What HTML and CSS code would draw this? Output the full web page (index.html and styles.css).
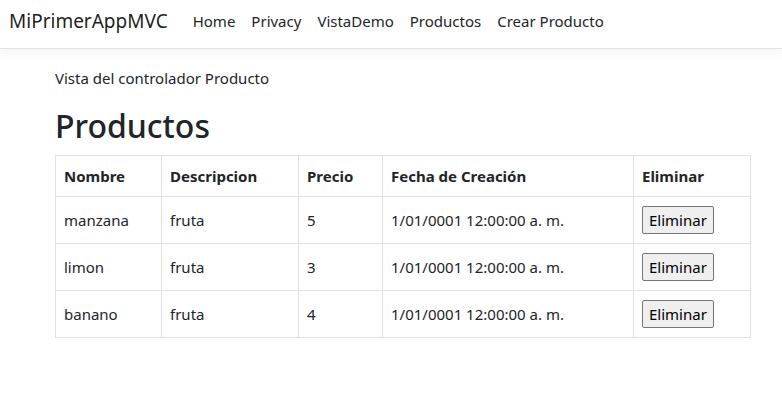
FILE: index.html
```html
<!DOCTYPE html>
<html lang="es">
<head>
<meta charset="utf-8">
<title>Productos - MiPrimerAppMVC</title>
<link rel="stylesheet" href="styles.css">
</head>
<body>
<header class="navbar">
  <a class="brand" href="#">MiPrimerAppMVC</a>
  <nav class="nav-links">
    <a href="#">Home</a>
    <a href="#">Privacy</a>
    <a href="#">VistaDemo</a>
    <a href="#">Productos</a>
    <a href="#">Crear Producto</a>
  </nav>
</header>
<main class="container">
  <p class="intro">Vista del controlador Producto</p>
  <h1 class="title">Productos</h1>
  <table class="grid">
    <thead>
      <tr>
        <th class="c-nombre">Nombre</th>
        <th class="c-desc">Descripcion</th>
        <th class="c-precio">Precio</th>
        <th class="c-fecha">Fecha de Creación</th>
        <th class="c-elim">Eliminar</th>
      </tr>
    </thead>
    <tbody>
      <tr>
        <td>manzana</td><td>fruta</td><td>5</td><td>1/01/0001 12:00:00 a. m.</td>
        <td><button class="btn" type="button">Eliminar</button></td>
      </tr>
      <tr>
        <td>limon</td><td>fruta</td><td>3</td><td>1/01/0001 12:00:00 a. m.</td>
        <td><button class="btn" type="button">Eliminar</button></td>
      </tr>
      <tr>
        <td>banano</td><td>fruta</td><td>4</td><td>1/01/0001 12:00:00 a. m.</td>
        <td><button class="btn" type="button">Eliminar</button></td>
      </tr>
    </tbody>
  </table>
</main>
</body>
</html>
```

FILE: styles.css
```css
html, body {
  margin: 0;
  padding: 0;
  background: #fff;
}
body {
  font-family: "Noto Sans", "Open Sans", sans-serif;
  font-size: 15px;
  line-height: 24px;
  color: #212529;
}
a {
  text-decoration: none;
}
.navbar {
  display: flex;
  align-items: center;
  height: 48px;
  border-bottom: 1px solid #dee2e6;
  box-shadow: 0 4px 12px rgba(0, 0, 0, 0.05);
  padding-left: 9px;
}
.brand {
  font-size: 19px;
  color: rgba(0, 0, 0, 0.9);
  margin-right: 25px;
  line-height: 30px;
  margin-top: -6px;
}
.nav-links {
  display: flex;
  gap: 16px;
  margin-top: -6px;
}
.nav-links a {
  color: #212529;
  font-size: 15px;
}
.container {
  margin: 17px 0 0 55px;
  width: 696px;
}
.intro {
  margin: 0 0 16px;
}
.title {
  font-size: 32px;
  font-weight: 500;
  line-height: 40px;
  margin: 0 0 9px;
}
.grid {
  border-collapse: collapse;
  width: 695px;
  table-layout: fixed;
}
.grid th, .grid td {
  border: 1px solid #dee2e6;
  padding: 8px 8px;
  text-align: left;
  vertical-align: middle;
}
.grid th {
  box-sizing: border-box;
  font-weight: 700;
  height: 41px;
}
.grid td {
  height: 30px;
}
.c-nombre { width: 106px; }
.c-desc { width: 137px; }
.c-precio { width: 84px; }
.c-fecha { width: 251px; }
.c-elim { width: 117px; }
.btn {
  font-family: inherit;
  font-size: 15px;
  line-height: 24px;
  color: #000;
  background: #efefef;
  border: 1px solid #767676;
  border-radius: 2px;
  padding: 1px 6px;
}
```
